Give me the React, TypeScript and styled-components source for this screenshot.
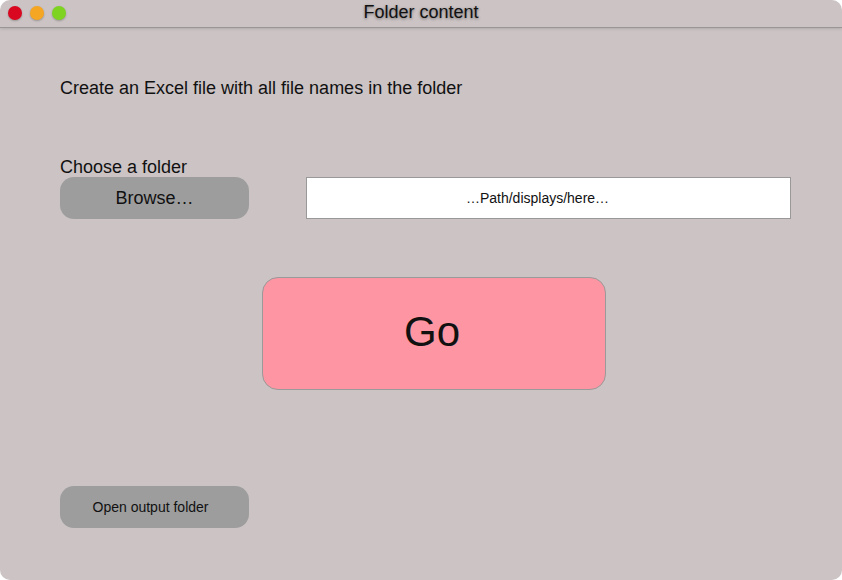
import React from 'react';
import styled, { createGlobalStyle } from 'styled-components';

const GlobalStyle = createGlobalStyle`
    html, body {
        margin: 0;
        padding: 0;
        background: #ffffff;
    }
    body {
        font-family: 'Liberation Sans', Arial, sans-serif;
    }
`;

const Window = styled.div`
    width: 842px;
    height: 580px;
    box-sizing: border-box;
    background: #cbc3c4;
    border-radius: 10px;
    overflow: hidden;
    display: flex;
    flex-direction: column;
`;

const TitleBar = styled.div`
    position: relative;
    height: 27px;
    flex-shrink: 0;
    border-bottom: 1px solid #9a9697;
    box-shadow: 0 1px 3px rgba(0, 0, 0, 0.12);
    display: flex;
    align-items: center;
    justify-content: center;
`;

const Lights = styled.div`
    position: absolute;
    left: 8px;
    top: 6px;
    display: flex;
    gap: 8px;
`;

const Light = styled.span<{ color: string }>`
    width: 14px;
    height: 14px;
    border-radius: 50%;
    background: ${({ color }) => color};
    box-shadow: 0 1px 2px rgba(0, 0, 0, 0.25);
`;

const Title = styled.div`
    font-size: 18px;
    color: #111;
    margin-top: -2px;
    text-shadow: 0 1px 3px rgba(0, 0, 0, 0.45);
`;

const Content = styled.div`
    display: flex;
    flex-direction: column;
    align-items: flex-start;
    padding: 50px 0 0 60px;
`;

const Intro = styled.div`
    font-size: 18px;
    line-height: 20px;
    color: #111;
`;

const Label = styled.div`
    margin-top: 59px;
    font-size: 18px;
    line-height: 20px;
    color: #111;
`;

const Row = styled.div`
    display: flex;
    align-items: center;
    gap: 57px;
`;

const GrayButton = styled.button<{ size: number; shift?: number }>`
    width: 189px;
    height: 42px;
    border: none;
    border-radius: 14px;
    background: #9d9d9d;
    color: #111;
    font-family: 'Liberation Sans', Arial, sans-serif;
    font-size: ${({ size }) => size}px;
    padding: 0 ${({ shift = 0 }) => shift}px 0 0;
    cursor: pointer;
`;

const PathBox = styled.div`
    width: 485px;
    height: 42px;
    box-sizing: border-box;
    background: #ffffff;
    border: 1px solid #999;
    display: flex;
    align-items: center;
    justify-content: center;
    font-size: 14px;
    color: #111;
    padding-right: 22px;
`;

const GoButton = styled.button`
    margin: 58px 0 0 202px;
    width: 344px;
    height: 113px;
    box-sizing: border-box;
    border: 1px solid #9a9a9a;
    border-radius: 16px;
    background: #fe95a2;
    color: #111;
    font-family: 'Liberation Sans', Arial, sans-serif;
    font-size: 42px;
    padding: 0 4px 4px 0;
    cursor: pointer;
`;

const Bottom = styled.div`
    margin-top: 96px;
`;

export default function App() {
    return (
        <>
            <GlobalStyle />
            <Window>
                <TitleBar>
                    <Lights>
                        <Light color="#d9071f" />
                        <Light color="#f5a623" />
                        <Light color="#7ed321" />
                    </Lights>
                    <Title>Folder content</Title>
                </TitleBar>
                <Content>
                    <Intro>Create an Excel file with all file names in the folder</Intro>
                    <Label>Choose a folder</Label>
                    <Row>
                        <GrayButton size={18}>Browse…</GrayButton>
                        <PathBox>…Path/displays/here…</PathBox>
                    </Row>
                    <GoButton>Go</GoButton>
                    <Bottom>
                        <GrayButton size={14} shift={8}>
                            Open output folder
                        </GrayButton>
                    </Bottom>
                </Content>
            </Window>
        </>
    );
}
